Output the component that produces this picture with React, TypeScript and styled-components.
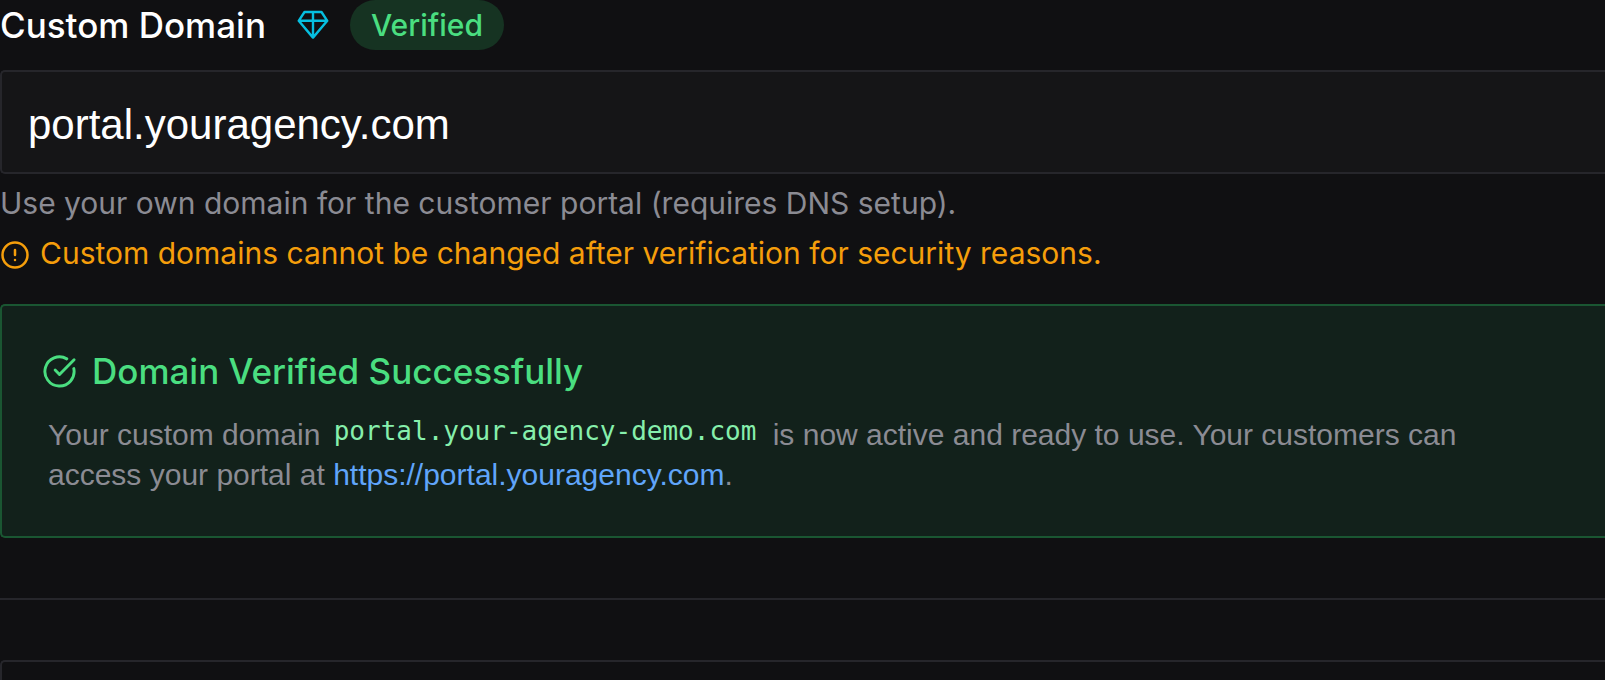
import React from "react";
import styled, { createGlobalStyle } from "styled-components";
import { CircleAlert, CircleCheckBig } from "lucide-react";

const GlobalStyle = createGlobalStyle`
  * { box-sizing: border-box; }
  body {
    margin: 0;
    background: #101012;
    color: #ffffff;
    font-family: Inter, "Liberation Sans", sans-serif;
  }
`;

const Page = styled.main`
  display: flex;
  flex-direction: column;
  min-height: 100vh;
`;

const Header = styled.div`
  display: flex;
  align-items: center;
  height: 50px;
`;

const Label = styled.label`
  font-size: 35px;
  line-height: 50px;
  font-weight: 500;
`;

const GemIcon = styled.svg`
  width: 32px;
  height: 30px;
  margin: 0 21px 0 31px;
  flex: none;
`;

const Badge = styled.span`
  padding: 0 21px;
  border-radius: 25px;
  background: #163322;
  color: #4ade80;
  font-size: 30px;
  line-height: 50px;
  font-weight: 500;
`;

const DomainInput = styled.input`
  width: 100%;
  height: 104px;
  margin-top: 20px;
  padding: 6px 28px 0 26px;
  border: 2px solid #26262b;
  border-right: 0;
  border-radius: 5px 0 0 5px;
  outline: none;
  background: #151517;
  color: #ffffff;
  font-family: "Liberation Sans", Arial, sans-serif;
  font-size: 42px;
`;

const Hint = styled.p<{ $warning?: boolean }>`
  display: flex;
  align-items: center;
  gap: 10px;
  margin: ${(p) => (p.$warning ? "10px" : "9px")} 0 0;
  color: ${(p) => (p.$warning ? "#f59e0b" : "#8b8b93")};
  font-size: 30px;
  line-height: 40px;

  svg {
    flex: none;
    margin-top: 3px;
  }
`;

const Notice = styled.section`
  margin-top: 31px;
  padding: 45px 40px 41px;
  border: 2px solid #1a5632;
  border-right: 0;
  border-radius: 5px 0 0 5px;
  background: #12211b;
`;

const NoticeTitle = styled.h2`
  display: flex;
  align-items: center;
  gap: 15px;
  margin: 0;
  color: #4ade80;
  font-size: 35px;
  line-height: 40px;
  font-weight: 500;

  svg {
    flex: none;
  }
`;

const NoticeText = styled.p`
  max-width: 1480px;
  margin: 24px 0 0 6px;
  color: #8b8b93;
  font-family: "Liberation Sans", Arial, sans-serif;
  font-size: 30px;
  line-height: 40px;
`;

const DomainCode = styled.code`
  position: relative;
  top: -5px;
  margin: 0 8px 0 5px;
  color: #86efac;
  font-family: "DejaVu Sans Mono", monospace;
  font-size: 26px;
  line-height: 30px;
`;

const PortalLink = styled.a`
  color: #60a5fa;
  text-decoration: none;
`;

const Divider = styled.hr`
  width: 100%;
  height: 2px;
  margin: 60px 0;
  border: 0;
  background: #26262b;
`;

const NextCard = styled.section`
  flex: 1;
  border: 2px solid #26262b;
  border-width: 2px 0 0 2px;
  border-radius: 5px 0 0 0;
`;

export default function App() {
  return (
    <>
      <GlobalStyle />
      <Page>
        <Header>
          <Label htmlFor="domain">Custom Domain</Label>
          <GemIcon viewBox="0 0 32 30" fill="none" stroke="#06bfe0" strokeWidth="2.4" strokeLinejoin="round" aria-hidden="true">
            <path d="M7.5 2H24.5L30.3 10.8L16 27.6L1.7 10.8ZM1.7 10.8H30.3M16 2V27.6" />
          </GemIcon>
          <Badge>Verified</Badge>
        </Header>
        <DomainInput id="domain" type="text" readOnly value="portal.youragency.com" />
        <Hint>Use your own domain for the customer portal (requires DNS setup).</Hint>
        <Hint $warning>
          <CircleAlert size={30} aria-hidden="true" />
          <span>Custom domains cannot be changed after verification for security reasons.</span>
        </Hint>
        <Notice>
          <NoticeTitle>
            <CircleCheckBig size={35} aria-hidden="true" />
            Domain Verified Successfully
          </NoticeTitle>
          <NoticeText>
            Your custom domain <DomainCode>portal.your-agency-demo.com</DomainCode> is now active and ready to use.
            Your customers can access your portal at{" "}
            <PortalLink href="https://portal.youragency.com">https://portal.youragency.com</PortalLink>.
          </NoticeText>
        </Notice>
        <Divider />
        <NextCard />
      </Page>
    </>
  );
}
